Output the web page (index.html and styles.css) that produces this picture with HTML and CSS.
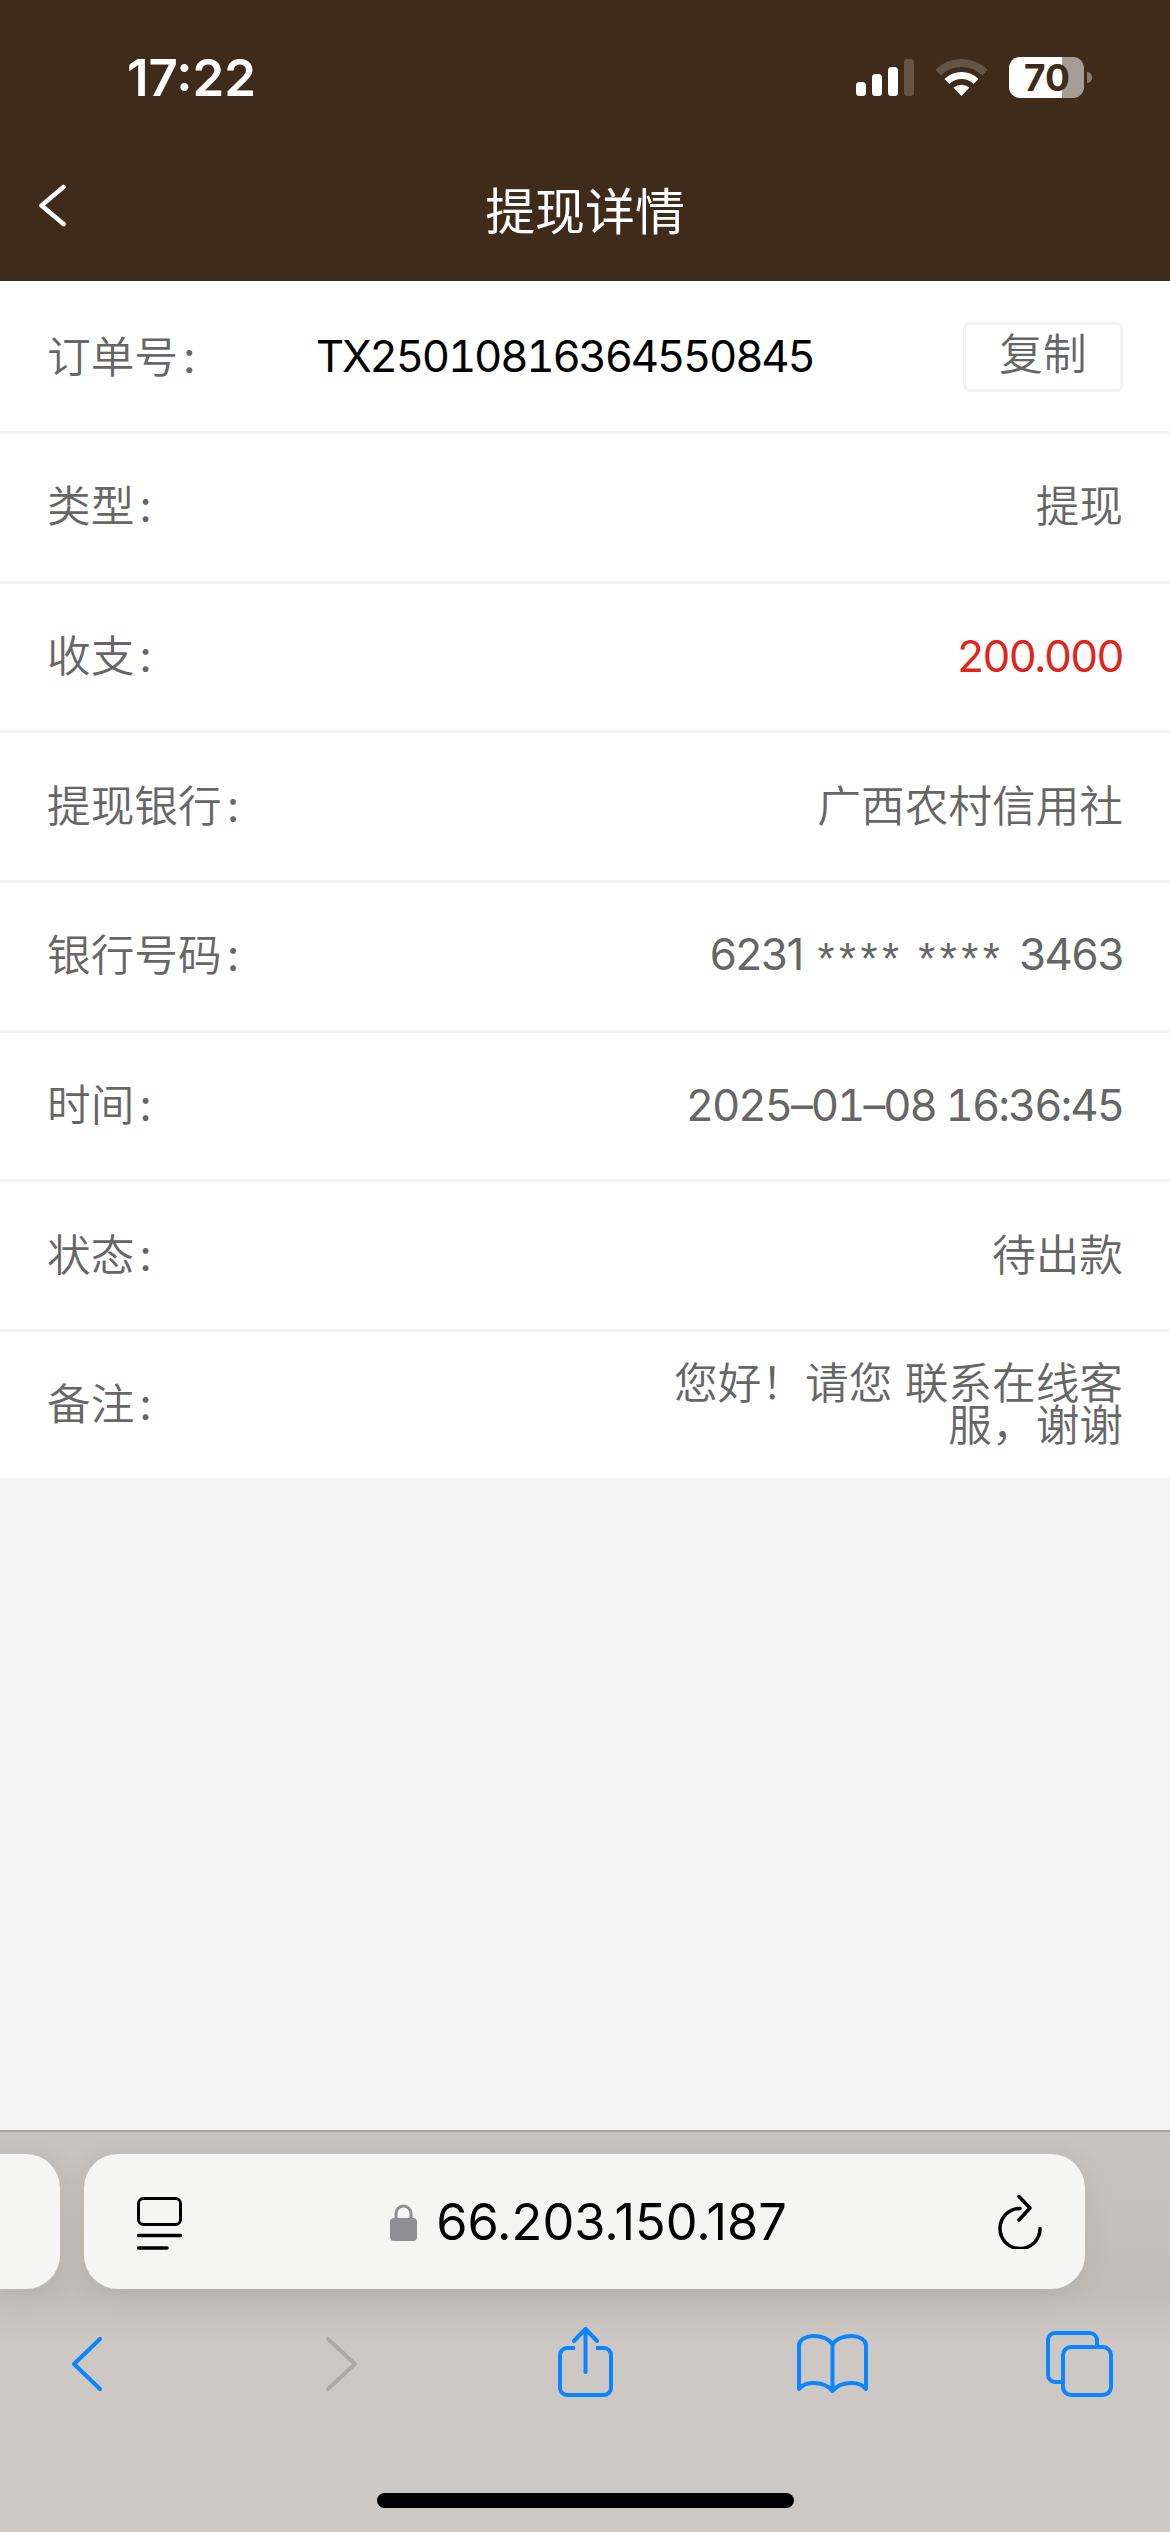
FILE: index.html
```html
<!DOCTYPE html>
<html lang="zh">
<head>
<meta charset="utf-8">
<title>提现详情</title>
<link rel="stylesheet" href="styles.css">
</head>
<body>
<div class="page">
  <header class="header">
    <div class="status">
      <span class="time">17:22</span>
      <div class="status-icons">
        <svg class="signal" width="58" height="37" viewBox="0 0 58 37"><rect x="0" y="23" width="10" height="14" rx="3.5" fill="#fff"/><rect x="16" y="15" width="10" height="22" rx="3.5" fill="#fff"/><rect x="32" y="8" width="10" height="29" rx="3.5" fill="#fff"/><rect x="48" y="0" width="10" height="37" rx="3.5" fill="#fff" fill-opacity=".2"/></svg>
        <svg class="wifi" width="51" height="37" viewBox="0 0 51 37"><path d="M2.2 13.7A33 33 0 0 1 48.8 13.7" fill="none" stroke="#fff" stroke-opacity=".2" stroke-width="8"/><path d="M11 22.5A20.5 20.5 0 0 1 40 22.5" fill="none" stroke="#fff" stroke-width="7"/><path d="M17.5 28.5Q25.5 23 33.5 28.5L25.5 37Z" fill="#fff"/></svg>
        <div class="battery"><span class="battery-num">70</span></div>
        <div class="battery-nub"></div>
      </div>
    </div>
    <div class="titlebar">
      <svg class="back" width="27" height="43" viewBox="0 0 27 43"><path d="M24.500 3L2.500 21.500L24.500 40" fill="none" stroke="#fff" stroke-width="4.500" stroke-linecap="round" stroke-linejoin="round"/></svg>
      <h1 class="title">提现详情</h1>
    </div>
  </header>

  <main class="list">
    <div class="row row-first">
      <span class="label order-label">订单号<span class="colon">:</span></span>
      <span class="order-no">TX25010816364550845</span>
      <button class="copy">复制</button>
    </div>
    <div class="row"><span class="label">类型<span class="colon">:</span></span><span class="value cjk">提现</span></div>
    <div class="row"><span class="label">收支<span class="colon">:</span></span><span class="value num amount">200.000</span></div>
    <div class="row"><span class="label">提现银行<span class="colon">:</span></span><span class="value cjk">广西农村信用社</span></div>
    <div class="row"><span class="label">银行号码<span class="colon">:</span></span><span class="value num card">6231 <span class="stars">****</span> <span class="stars">****</span> 3463</span></div>
    <div class="row"><span class="label">时间<span class="colon">:</span></span><span class="value date">2025–01–08 16:36:45</span></div>
    <div class="row"><span class="label">状态<span class="colon">:</span></span><span class="value cjk">待出款</span></div>
    <div class="row row-last"><span class="label">备注<span class="colon">:</span></span><span class="value note">您好！请您 联系在线客服，谢谢</span></div>
  </main>

  <div class="spacer"></div>

  <footer class="toolbar">
    <div class="address-row">
      <div class="prev-tab"></div>
      <div class="address">
        <svg class="page-icon" width="45" height="53" viewBox="0 0 45 53"><rect x="1.500" y="1.500" width="42" height="26" rx="5" fill="none" stroke="#000" stroke-width="3"/><path d="M1.500 38.500H43.500M1.500 51H30" fill="none" stroke="#000" stroke-width="3.500" stroke-linecap="round"/></svg>
        <div class="url">
          <svg class="lock" width="27" height="38" viewBox="0 0 27 38"><path d="M6 17V10.500a7.500 7.500 0 0 1 15 0V17" fill="none" stroke="#8e8e93" stroke-width="3"/><rect x="0" y="15" width="27" height="23" rx="4" fill="#8e8e93"/></svg>
          <span class="url-text">66.203.150.187</span>
        </div>
        <svg class="reload" width="44" height="54" viewBox="0 0 44 54"><path d="M42 33.500A20 20 0 1 1 22 13.500" fill="none" stroke="#000" stroke-width="3.500" stroke-linecap="round"/><path d="M21 1.500L32 13L21 25" fill="none" stroke="#000" stroke-width="3.500" stroke-linecap="round" stroke-linejoin="round"/></svg>
      </div>
    </div>
    <nav class="nav">
      <svg class="nav-back" width="30" height="54" viewBox="0 0 30 54"><path d="M28 2L2 27L28 52" fill="none" stroke="#0a84ff" stroke-width="4" stroke-linecap="round" stroke-linejoin="round"/></svg>
      <svg class="nav-forward" width="31" height="54" viewBox="0 0 31 54"><path d="M2 2L29 27L2 52" fill="none" stroke="#adaaa6" stroke-width="4" stroke-linecap="round" stroke-linejoin="round"/></svg>
      <svg class="nav-share" width="55" height="70" viewBox="0 0 55 70"><path d="M17 21H9a7 7 0 0 0-7 7v33a7 7 0 0 0 7 7h37a7 7 0 0 0 7-7V28a7 7 0 0 0-7-7h-8" fill="none" stroke="#0a84ff" stroke-width="4"/><path d="M27.500 45V2M16 14L27.500 2L39 14" fill="none" stroke="#0a84ff" stroke-width="4" stroke-linecap="round" stroke-linejoin="round"/></svg>
      <svg class="nav-book" width="71" height="59" viewBox="0 0 71 59"><path d="M35.500 10C31 4 24 2 16 2C9 2 2 6 2 11V55C6 50 11 49 16 49C24 49 31 51 35.500 57C40 51 47 49 55 49C60 49 65 50 69 55V11C69 6 62 2 55 2C47 2 40 4 35.500 10V57" fill="none" stroke="#0a84ff" stroke-width="4" stroke-linejoin="round"/></svg>
      <svg class="nav-tabs" width="67" height="66" viewBox="0 0 67 66"><path d="M16 51H9a7 7 0 0 1-7-7V9a7 7 0 0 1 7-7h35a7 7 0 0 1 7 7v5" fill="none" stroke="#0a84ff" stroke-width="4"/><rect x="17" y="16" width="48" height="48" rx="8" fill="none" stroke="#0a84ff" stroke-width="4"/></svg>
    </nav>
    <div class="home-bar"></div>
  </footer>
</div>
</body>
</html>
```

FILE: styles.css
```css
* { box-sizing: border-box; }
html, body { margin: 0; padding: 0; }
body { background: #f3f3f3; font-family: Inter, "Noto Sans CJK SC", sans-serif; }
.page { width: 1170px; height: 2532px; display: flex; flex-direction: column; overflow: hidden; }

.header { height: 281px; background: #3e2b19; color: #fff; flex: none; }
.status { height: 182px; display: flex; justify-content: space-between; align-items: flex-start; padding: 50px 78px 0 127px; }
.time { font-size: 51px; font-weight: 600; line-height: 56px; }
.status-icons { display: flex; align-items: flex-start; padding-top: 7px; }
.signal { margin: 2px 22px 0 0; }
.wifi { margin: 2px 22px 0 0; }
.battery { width: 75px; height: 41px; border-radius: 11px; background: linear-gradient(90deg, #fff 0, #fff 53px, #a69e96 53px, #a69e96 100%); display: flex; align-items: center; padding-left: 15px; }
.battery-num { color: #3e2b19; font-size: 37px; font-weight: 700; line-height: 41px; }
.battery-nub { width: 5px; height: 11px; margin: 15px 0 0 3px; border-radius: 0 5px 5px 0; background: #857a6e; }
.titlebar { position: relative; display: flex; justify-content: center; align-items: center; height: 60px; }
.back { position: absolute; left: 39px; top: 2px; }
.title { margin: 0; font-size: 49.92px; font-weight: 400; line-height: 60px; }

.list { background: #fff; flex: none; }
.row { display: flex; align-items: center; justify-content: space-between; height: 149.67px; padding: 0 47px; border-bottom: 3px solid #f3f3f3; font-size: 43.68px; font-weight: 350; color: #666; }
.row-first { height: 153px; }
.row-last { height: 146px; border-bottom: 0; }
.label { flex: none; margin-bottom: 8px; }
.cjk { margin-bottom: 8px; }
.colon { margin-left: 5px; font-weight: 400; }
.order-label { width: 269px; margin-bottom: 5px; }
.order-no { color: #000; font-weight: 400; font-variant-numeric: tabular-nums; letter-spacing: -2.2px; }
.copy { margin-left: auto; margin-top: 2px; width: 160px; height: 70px; padding: 0 0 5px; background: #fff; border: 3px solid #f3f3f3; border-radius: 6px; color: #666; font: inherit; line-height: 1; }
.num { font-weight: 400; letter-spacing: -1.3px; }
.date { font-weight: 400; font-variant-numeric: tabular-nums; letter-spacing: -2px; }
.card { word-spacing: 3.7px; }
.stars { font-family: "Liberation Sans", sans-serif; letter-spacing: 4.5px; vertical-align: -4px; }
.amount { color: #e1251b; }
.note { width: 460px; text-align: right; line-height: 42px; }

.spacer { flex: 1; background: #f4f4f4; }

.toolbar { height: 402px; flex: none; position: relative; border-top: 2px solid #aaa59f; background: linear-gradient(180deg, #c8c4bf 0, #c1bdb6 160px, #cdc8c3 210px, #cdc8c3 100%); }
.address-row { display: flex; gap: 24px; padding-top: 22px; }
.prev-tab { width: 60px; height: 135px; background: #f5f5f3; border-radius: 0 34px 34px 0; box-shadow: 0 4px 30px rgba(0, 0, 0, .07); }
.address { width: 1001px; height: 135px; display: flex; align-items: center; justify-content: space-between; padding: 0 43px 0 53px; background: #f5f5f3; border-radius: 34px; box-shadow: 0 4px 30px rgba(0, 0, 0, .07); }
.page-icon { margin-top: 3px; }
.url { display: flex; align-items: center; gap: 19px; margin-left: -3px; }
.url-text { color: #000; font-size: 50.5px; line-height: 60px; }
.nav { display: flex; align-items: flex-start; padding: 38px 0 0 72px; }
.nav-back { margin-top: 10px; }
.nav-forward { margin: 10px 0 0 224px; }
.nav-share { margin-left: 201px; }
.nav-book { margin: 7px 0 0 184px; }
.nav-tabs { margin: 4px 0 0 178px; }
.home-bar { position: absolute; left: 377px; top: 361px; width: 417px; height: 15px; border-radius: 8px; background: #000; }
```
